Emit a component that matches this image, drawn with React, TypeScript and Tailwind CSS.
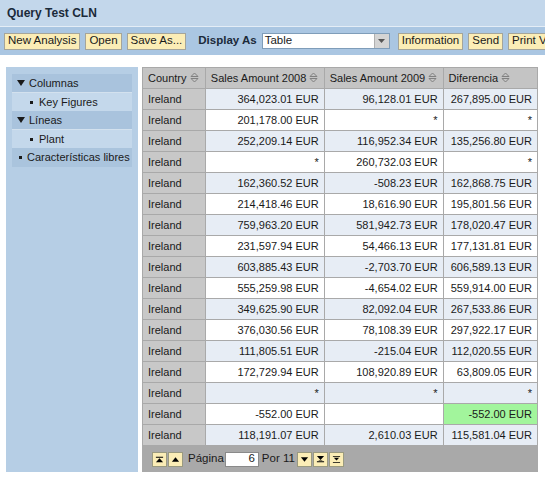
import React from "react";

const rows: [string, string, string, boolean?][] = [
  ["364,023.01 EUR", "96,128.01 EUR", "267,895.00 EUR"],
  ["201,178.00 EUR", "*", "*"],
  ["252,209.14 EUR", "116,952.34 EUR", "135,256.80 EUR"],
  ["*", "260,732.03 EUR", "*"],
  ["162,360.52 EUR", "-508.23 EUR", "162,868.75 EUR"],
  ["214,418.46 EUR", "18,616.90 EUR", "195,801.56 EUR"],
  ["759,963.20 EUR", "581,942.73 EUR", "178,020.47 EUR"],
  ["231,597.94 EUR", "54,466.13 EUR", "177,131.81 EUR"],
  ["603,885.43 EUR", "-2,703.70 EUR", "606,589.13 EUR"],
  ["555,259.98 EUR", "-4,654.02 EUR", "559,914.00 EUR"],
  ["349,625.90 EUR", "82,092.04 EUR", "267,533.86 EUR"],
  ["376,030.56 EUR", "78,108.39 EUR", "297,922.17 EUR"],
  ["111,805.51 EUR", "-215.04 EUR", "112,020.55 EUR"],
  ["172,729.94 EUR", "108,920.89 EUR", "63,809.05 EUR"],
  ["*", "*", "*"],
  ["-552.00 EUR", "", "-552.00 EUR", true],
  ["118,191.07 EUR", "2,610.03 EUR", "115,581.04 EUR"],
];

function SortIcon() {
  return (
    <svg width="9" height="11" viewBox="0 0 9 11" className="ml-[3px] inline-block align-[-1px]">
      <path d="M1 4.5 L4.5 1 L8 4.5 Z" fill="none" stroke="#808080" strokeWidth="1" />
      <path d="M1 6.5 L4.5 10 L8 6.5 Z" fill="none" stroke="#808080" strokeWidth="1" />
    </svg>
  );
}

function Btn({ children }: { children: React.ReactNode }) {
  return (
    <div className="flex h-[17px] shrink-0 items-center border border-[#a5a59a] bg-[#fbedb6] px-[3px] text-[11.5px] leading-none text-[#1a1a1a]">
      {children}
    </div>
  );
}

function NavBtn({ d }: { d: string }) {
  return (
    <div className="flex h-[15px] w-[15px] shrink-0 items-center justify-center border border-[#9a9a80] bg-[#fbedb6]">
      <svg width="9" height="9" viewBox="0 0 10 10">
        <path d={d} fill="#000" />
      </svg>
    </div>
  );
}

export default function App() {
  return (
    <div className="h-[481px] w-[545px] overflow-hidden bg-white font-['Liberation_Sans',Arial,sans-serif] text-[#1a1a1a]">
      <div className="flex h-[26px] items-center bg-[#c3d7eb] pl-[7px] text-[12px] font-bold text-[#1b2a3a]">
        Query Test CLN
      </div>
      <div className="h-px bg-[#e4edf6]" />
      <div className="flex h-[28px] items-center gap-[5px] whitespace-nowrap bg-[#aac6e2] pl-[4px]">
        <Btn>New Analysis</Btn>
        <Btn>Open</Btn>
        <Btn>Save As...</Btn>
        <span className="ml-[7px] shrink-0 text-[11.5px] font-bold text-[#1b2a3a]">Display As</span>
        <div className="flex h-[16px] w-[128px] shrink-0 items-center border border-[#7f9db9] bg-white">
          <span className="flex-1 pl-[2px] text-[11.5px] leading-none">Table</span>
          <div className="flex h-[14px] w-[15px] items-center justify-center border-l border-[#b0b0b0] bg-[#d4d4d4]">
            <svg width="7" height="4" viewBox="0 0 7 4">
              <path d="M0 0 H7 L3.5 4 Z" fill="#555" />
            </svg>
          </div>
        </div>
        <div className="ml-[3px] flex shrink-0 gap-[5px]">
          <Btn>Information</Btn>
          <Btn>Send</Btn>
          <Btn>Print Version</Btn>
        </div>
      </div>

      <div className="mt-[12px] flex gap-[4px] pl-[6px]">
        <div className="h-[405px] w-[132px] shrink-0 bg-[#b6cee5] px-[6px] pt-[7px] text-[11px] leading-none">
          <div className="flex h-[19px] items-center border-b border-[#d3e1ee] bg-[#a9c3dd] pl-[5px]">
            <svg width="8" height="6" viewBox="0 0 8 6" className="mr-[4px]">
              <path d="M0 0 H8 L4 6 Z" fill="#1a1a1a" />
            </svg>
            Columnas
          </div>
          <div className="flex h-[18px] items-center bg-[#c4d8eb] pl-[18px]">
            <span className="mr-[6px] inline-block h-[3px] w-[3px] bg-[#1a1a1a]" />
            Key Figures
          </div>
          <div className="flex h-[19px] items-center border-b border-[#d3e1ee] bg-[#a9c3dd] pl-[5px]">
            <svg width="8" height="6" viewBox="0 0 8 6" className="mr-[4px]">
              <path d="M0 0 H8 L4 6 Z" fill="#1a1a1a" />
            </svg>
            Líneas
          </div>
          <div className="flex h-[18px] items-center bg-[#c4d8eb] pl-[18px]">
            <span className="mr-[6px] inline-block h-[3px] w-[3px] bg-[#1a1a1a]" />
            Plant
          </div>
          <div className="flex h-[19px] items-center bg-[#aac4dd] pl-[7px]">
            <span className="mr-[5px] inline-block h-[3px] w-[3px] bg-[#1a1a1a]" />
            Características libres
          </div>
        </div>

        <div className="w-[396px] shrink-0">
          <table className="border-collapse text-[11px] leading-none" style={{ tableLayout: "fixed" }}>
            <colgroup>
              <col className="w-[63px]" />
              <col className="w-[119px]" />
              <col className="w-[119px]" />
              <col className="w-[95px]" />
            </colgroup>
            <thead>
              <tr className="h-[21px] bg-[#c4c4c4]">
                {["Country", "Sales Amount 2008", "Sales Amount 2009", "Diferencia"].map((h) => (
                  <th
                    key={h}
                    className="border border-[#a9a9a9] pl-[5px] text-left font-normal whitespace-nowrap"
                  >
                    {h}
                    <SortIcon />
                  </th>
                ))}
              </tr>
            </thead>
            <tbody>
              {rows.map((r, i) => {
                const light = i % 2 === 0;
                const bg = light ? "bg-[#e7edf5]" : "bg-white";
                return (
                  <tr key={i} className="h-[21px]">
                    <td className="border border-[#a9a9a9] bg-[#c8c8c8] pl-[5px]">Ireland</td>
                    <td className={`border border-[#a9a9a9] pr-[5px] text-right ${bg}`}>{r[0]}</td>
                    <td className={`border border-[#a9a9a9] pr-[5px] text-right ${bg}`}>{r[1]}</td>
                    <td
                      className={`border border-[#a9a9a9] pr-[5px] text-right ${
                        r[3] ? "bg-[#a2f59c]" : bg
                      }`}
                    >
                      {r[2]}
                    </td>
                  </tr>
                );
              })}
            </tbody>
          </table>
          <div className="flex h-[26px] w-[396px] items-center gap-[1px] bg-[#a9a9a9] pl-[10px] text-[11.5px] leading-none">
            <NavBtn d="M1 2 H9 V3 H1 Z M5 3.5 L9 8 H1 Z" />
            <NavBtn d="M5 2.5 L9 7.5 H1 Z" />
            <span className="ml-[4px]">Página</span>
            <div className="flex h-[15px] w-[34px] items-center justify-end border border-[#8a8a8a] bg-white pr-[3px]">
              6
            </div>
            <span className="ml-[2px] mr-[1px]">Por 11</span>
            <NavBtn d="M1 2.5 H9 L5 7.5 Z" />
            <NavBtn d="M1 1 H9 L5 5.5 Z M1 7 H9 V8 H1 Z M3 5.5 H7 V6 H3 Z" />
            <NavBtn d="M1 1 H9 V2 H1 Z M2 3 H8 L5 6 Z M1 8 H9 V9 H1 Z" />
          </div>
        </div>
      </div>
    </div>
  );
}
